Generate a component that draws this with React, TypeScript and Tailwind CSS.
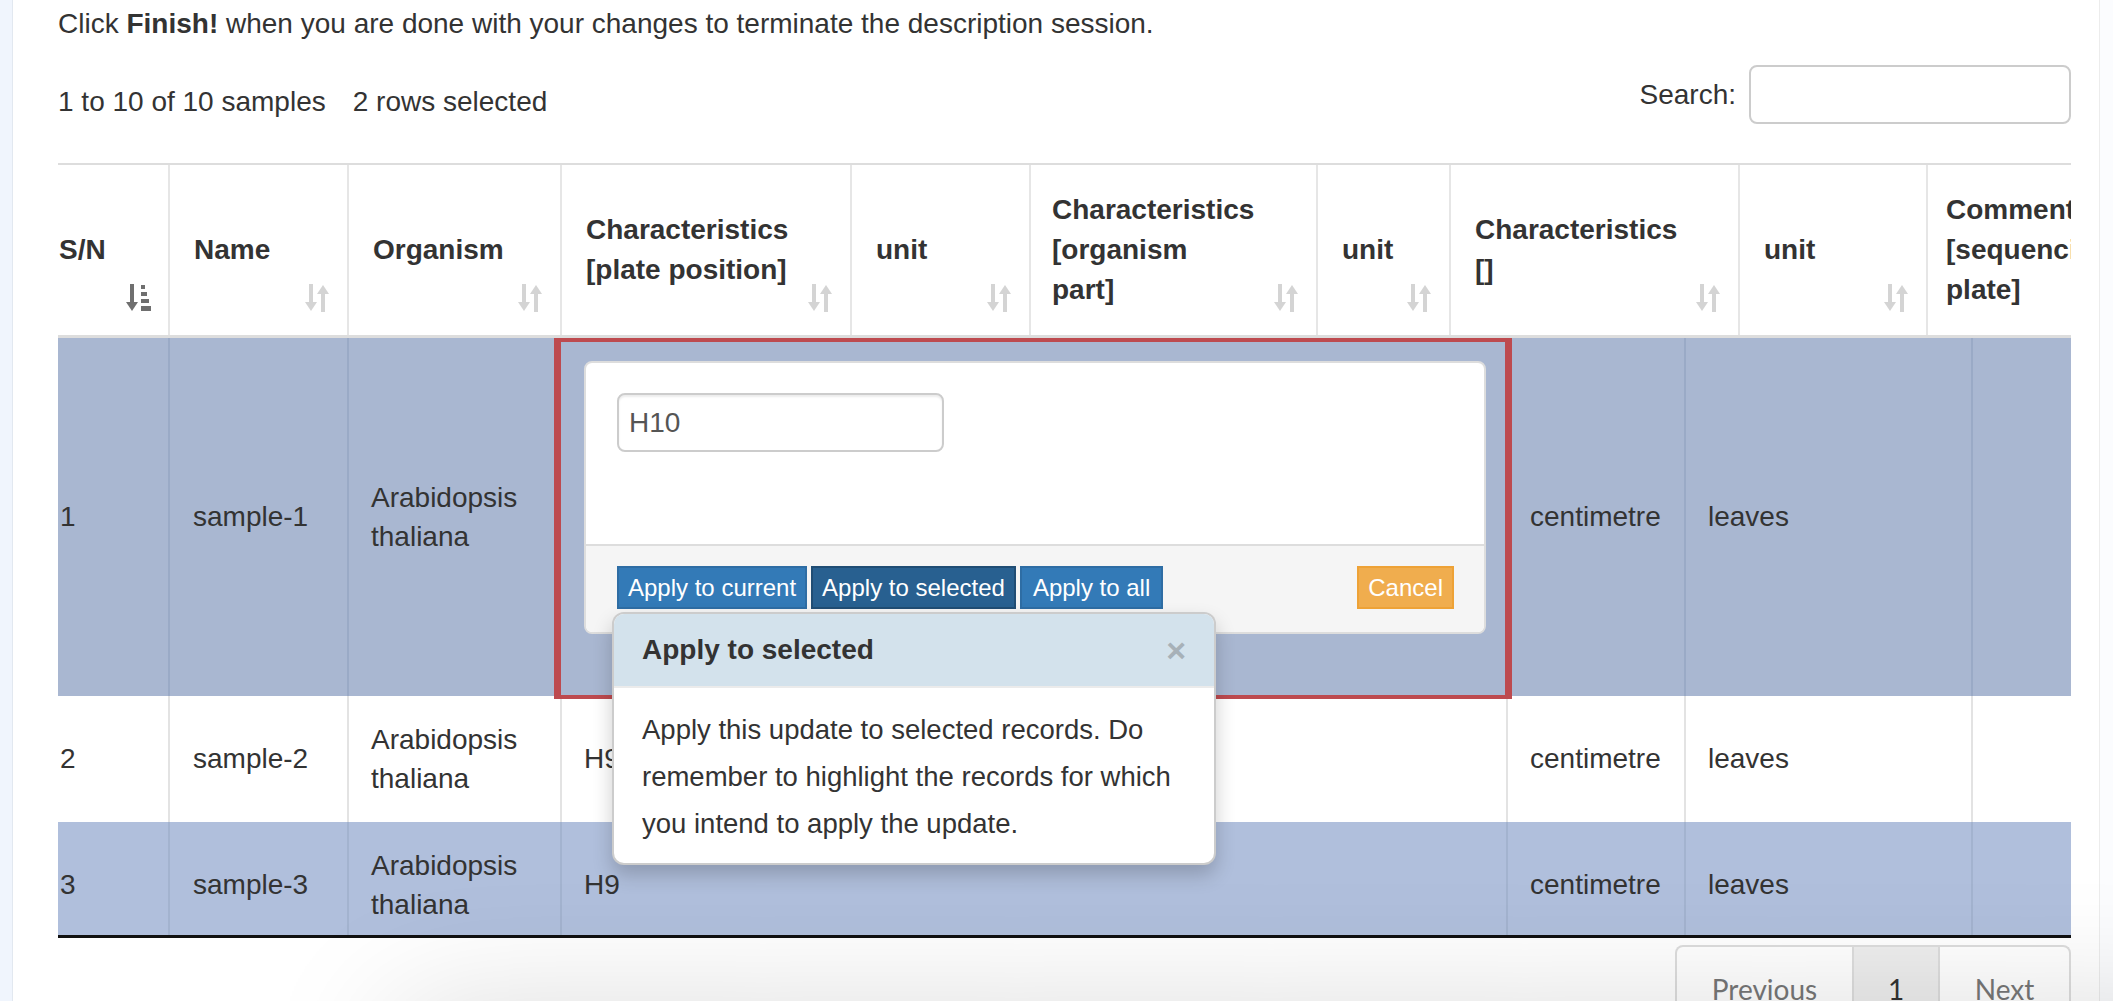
import React from "react";

type HeadCol = { w: number; lines: string[]; active?: boolean; first?: boolean; pl?: string };

const headCols: HeadCol[] = [
  { w: 111, lines: ["S/N"], active: true, first: true },
  { w: 179, lines: ["Name"] },
  { w: 213, lines: ["Organism"] },
  { w: 290, lines: ["Characteristics", "[plate position]"] },
  { w: 179, lines: ["unit"] },
  { w: 287, lines: ["Characteristics", "[organism", "part]"], pl: "pl-[21px]" },
  { w: 133, lines: ["unit"] },
  { w: 289, lines: ["Characteristics", "[]"] },
  { w: 188, lines: ["unit"] },
  { w: 240, lines: ["Comment", "[sequencing", "plate]"], pl: "pl-[18px]" },
];

const bodyCols = [111, 179, 213, 946, 178, 287, 200];

function SortIcon({ active }: { active?: boolean }) {
  if (active) {
    return (
      <svg width="28" height="28" viewBox="0 0 28 28">
        <rect x="6" y="0" width="4" height="20" fill="#6f6f6f" />
        <polygon points="2,18 14,18 8,27" fill="#6f6f6f" />
        <rect x="17" y="1" width="4" height="4" fill="#6f6f6f" />
        <rect x="17" y="8" width="6" height="4" fill="#6f6f6f" />
        <rect x="17" y="15" width="8" height="4" fill="#6f6f6f" />
        <rect x="17" y="22" width="10" height="5" fill="#6f6f6f" />
      </svg>
    );
  }
  return (
    <svg width="28" height="28" viewBox="0 0 28 28">
      <rect x="6" y="0" width="4" height="20" fill="#d4d4d4" />
      <polygon points="2,18 14,18 8,27" fill="#d4d4d4" />
      <rect x="18" y="8" width="4" height="20" fill="#d4d4d4" />
      <polygon points="14,10 26,10 20,1" fill="#d4d4d4" />
    </svg>
  );
}

function HeaderTable() {
  return (
    <div className="overflow-hidden border-t-2 border-b-[3px] border-[#dddddd]">
      <table className="table-fixed border-collapse w-[2109px]">
        <colgroup>
          {headCols.map((c, i) => (
            <col key={i} style={{ width: c.w }} />
          ))}
        </colgroup>
        <thead>
          <tr className="h-[170px]">
            {headCols.map((c, i) => (
              <th
                key={i}
                className={
                  "relative align-middle text-left font-bold leading-[40px] " +
                  (c.first ? "pl-[1px]" : (c.pl ?? "pl-[24px]") + " border-l-2 border-[#e6e6e6]")
                }
              >
                {c.lines.map((l, j) => (
                  <div key={j} className="whitespace-nowrap">
                    {l}
                  </div>
                ))}
                <span className="absolute right-[16px] bottom-[23px] flex">
                  <SortIcon active={c.active} />
                </span>
              </th>
            ))}
          </tr>
        </thead>
      </table>
    </div>
  );
}

function Editor() {
  return (
    <div className="relative -ml-[7px] -mr-[6px] -mb-[3px] h-[361px] border-x-[7px] border-y-[4px] border-[#bd4a4f] pl-[23px] pr-[19px] pt-[19px]">
      <div className="rounded-[8px] border-2 border-[#dddddd] bg-white overflow-hidden">
        <div className="h-[181px] px-[31px] pt-[30px]">
          <div className="flex h-[59px] w-[327px] items-center rounded-[8px] border-2 border-[#cccccc] pl-[10px] text-[#555555] shadow-[inset_0_2px_2px_rgba(0,0,0,0.075)]">
            H10
          </div>
        </div>
        <div className="flex h-[88px] items-start justify-between border-t-2 border-[#dddddd] bg-[#f5f5f5] pl-[31px] pr-[30px] pt-[20px]">
          <div className="flex gap-[4px] text-[24px] leading-[39px] text-white">
            <span className="border-2 border-[#2e6da4] bg-[#337ab7] px-[9px]">Apply to current</span>
            <span className="border-2 border-[#204d74] bg-[#286090] px-[9px]">Apply to selected</span>
            <span className="border-2 border-[#2e6da4] bg-[#337ab7] px-[11px]">Apply to all</span>
          </div>
          <span className="border-2 border-[#eea236] bg-[#f0ad4e] px-[9px] text-[24px] leading-[39px] text-white">
            Cancel
          </span>
        </div>
      </div>
      {/* popover */}
      <div className="absolute left-[51px] top-[270px] z-10 w-[604px] overflow-hidden rounded-[12px] border-2 border-[rgba(0,0,0,0.2)] bg-white shadow-[0_10px_20px_rgba(0,0,0,0.2)]">
        <div className="flex h-[74px] items-center justify-between border-b-2 border-[#ebebeb] bg-[#d3e2ec] pl-[28px] pr-[28px]">
          <span className="font-bold">Apply to selected</span>
          <span className="text-[34px] font-bold leading-none text-[#a7b1b8]">×</span>
        </div>
        <div className="px-[28px] pt-[18px] pb-[16px] text-[27.5px] leading-[47px]">
          Apply this update to selected records. Do remember to highlight the records for which you intend to apply the update.
        </div>
      </div>
    </div>
  );
}

type Row = { sn: string; name: string; plate: string; bg: string; line: string; h: string; editor?: boolean };

const rows: Row[] = [
  { sn: "1", name: "sample-1", plate: "", bg: "bg-[#a9b7d1]", line: "border-[#9aaac6]", h: "h-[358px]", editor: true },
  { sn: "2", name: "sample-2", plate: "H9", bg: "bg-white", line: "border-[#e3e3e3]", h: "h-[126px]" },
  { sn: "3", name: "sample-3", plate: "H9", bg: "bg-[#b0bfdc]", line: "border-[#a3b3cf]", h: "h-[126px]" },
];

function BodyTable() {
  return (
    <div className="h-[600px] overflow-hidden border-b-[3px] border-[#111111]">
      <table className="table-fixed border-collapse w-[2114px]">
        <colgroup>
          {bodyCols.map((w, i) => (
            <col key={i} style={{ width: w }} />
          ))}
        </colgroup>
        <tbody>
          {rows.map((r) => (
            <tr key={r.sn} className={r.bg + " " + r.h}>
              <td className="pl-[2px] align-middle">{r.sn}</td>
              <td className={"border-l-2 pl-[23px] align-middle " + r.line}>{r.name}</td>
              <td className={"border-l-2 pl-[22px] align-middle leading-[39px] " + r.line}>Arabidopsis thaliana</td>
              {r.editor ? (
                <td className="p-0 align-top">
                  <Editor />
                </td>
              ) : (
                <td className={"border-l-2 pl-[22px] align-middle " + r.line}>{r.plate}</td>
              )}
              <td className={"border-l-2 pl-[22px] align-middle " + r.line}>centimetre</td>
              <td className={"border-l-2 pl-[22px] align-middle " + r.line}>leaves</td>
              <td className={"border-l-2 " + r.line}></td>
            </tr>
          ))}
        </tbody>
      </table>
    </div>
  );
}

export default function App() {
  return (
    <div className="relative flex h-[1001px] w-[2113px] overflow-hidden bg-white font-['Liberation_Sans',Arial,sans-serif] text-[28px] text-[#333333]">
      {/* left edge */}
      <div className="w-[13px] shrink-0 border-r border-[#e2e8f0] bg-[#f0f5fd]" />

      <div className="w-[2058px] shrink-0 pl-[45px]">
        <p className="pt-[4px] leading-[40px] whitespace-nowrap">
          Click <b>Finish!</b> when you are done with your changes to terminate the description session.
        </p>

        <div className="mt-[21px] flex h-[59px] items-start justify-between">
          <div className="mt-[17px] leading-[40px]">
            1 to 10 of 10 samples<span className="ml-[27px]">2 rows selected</span>
          </div>
          <label className="flex items-center gap-[13px]">
            <span className="leading-[40px]">Search:</span>
            <span className="h-[59px] w-[322px] rounded-[8px] border-2 border-[#cccccc] bg-white" />
          </label>
        </div>

        <div className="mt-[39px]">
          <HeaderTable />
          <BodyTable />
        </div>

        <div className="mt-[7px] flex justify-end">
          <ul className="flex h-[80px] rounded-t-[8px] border-2 border-b-0 border-[#dddddd] font-['Lato',sans-serif] leading-[40px]">
            <li className="w-[175px] pt-[22px] text-center text-[#777777]">Previous</li>
            <li className="w-[86px] border-l-2 border-[#dddddd] bg-[#eeeeee] pt-[22px] text-center text-[#333333]">1</li>
            <li className="w-[131px] border-l-2 border-[#dddddd] pt-[22px] text-center text-[#777777]">Next</li>
          </ul>
        </div>
      </div>

      <div className="w-[28px] shrink-0" />
      {/* right edge */}
      <div className="flex-1 border-l border-[#ececec] bg-[#fbfcfe]" />

      {/* shadow of fixed footer below the fold */}
      <div className="pointer-events-none absolute left-[420px] right-[-200px] top-[1040px] h-[200px] shadow-[0_0_140px_20px_rgba(0,0,0,0.18)]" />
    </div>
  );
}
